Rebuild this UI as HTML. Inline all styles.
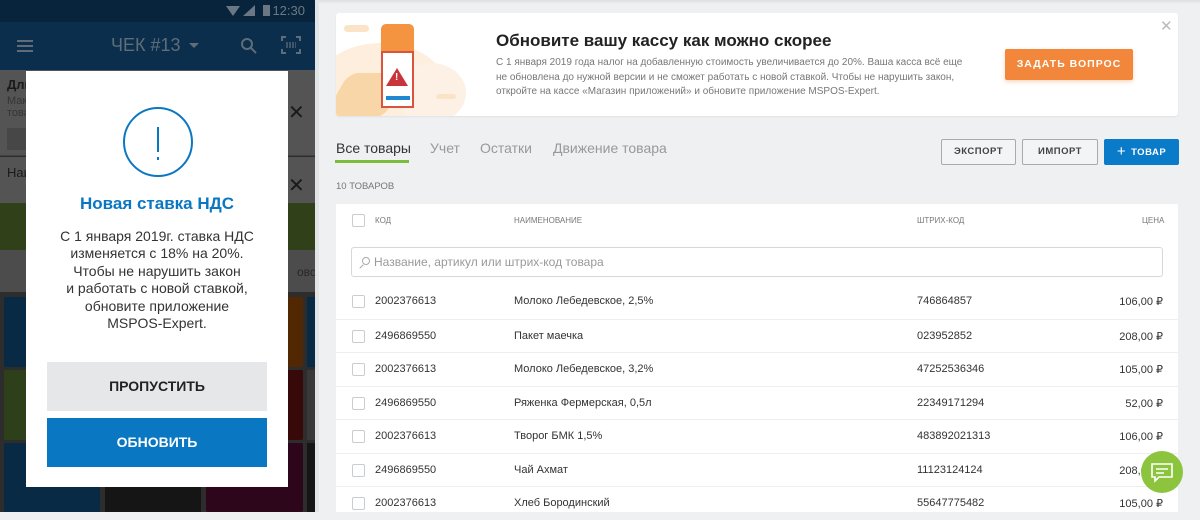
<!DOCTYPE html>
<html><head><meta charset="utf-8"><style>
*{margin:0;padding:0;box-sizing:border-box}
body{width:1200px;height:512px;overflow:hidden;background:#eef0f2;font-family:"Liberation Sans","Noto Sans CJK SC",sans-serif;position:relative}
.a{position:absolute}
.t{position:absolute;white-space:nowrap}
.row{position:absolute;left:336px;width:842px;height:34px;border-top:1px solid #eceef0;font-size:11px;color:#333}
.row .cb{position:absolute;left:16px;top:10px;width:13px;height:13px;border:1px solid #c9ccd0;border-radius:2px;background:#fff}
.row span{position:absolute;top:10px}
</style></head><body>
<!-- phone -->
<div class="a" style="left:0;top:0;width:315px;height:512px;background:#3a3a3a;overflow:hidden">
 <div class="a" style="left:0;top:0;width:315px;height:22px;background:#0a2f4d"></div>
 <div class="t" style="right:10px;top:3px;color:#8a9aa8;font-size:13px">12:30</div>
 <div class="a" style="left:226px;top:6px;width:0;height:0;border-left:7px solid transparent;border-right:7px solid transparent;border-top:10px solid #8a9aa8"></div>
 <div class="a" style="left:243px;top:5px;width:0;height:0;border-left:12px solid transparent;border-bottom:11px solid #8a9aa8"></div>
 <div class="a" style="left:263px;top:5px;width:7px;height:11px;background:#8a9aa8"></div>
 <div class="a" style="left:0;top:22px;width:315px;height:48px;background:#0d3c60"></div>
 <div class="a" style="left:17px;top:40px;width:16px;height:2px;background:#7b8c9b;box-shadow:0 5px 0 #7b8c9b,0 10px 0 #7b8c9b"></div>
 <div class="t" style="left:111px;top:35px;color:#7b8c9b;font-size:18px">ЧЕК #13</div>
 <div class="a" style="left:189px;top:43px;border-left:5px solid transparent;border-right:5px solid transparent;border-top:5px solid #7b8c9b"></div>
 <svg class="a" style="left:240px;top:37px" width="18" height="18" viewBox="0 0 18 18"><circle cx="7" cy="7" r="5" fill="none" stroke="#7b8c9b" stroke-width="2"/><path d="M11 11l5 5" stroke="#7b8c9b" stroke-width="2"/></svg>
 <svg class="a" style="left:281px;top:36px" width="20" height="18" viewBox="0 0 20 18"><path d="M1 5V1h4M15 1h4v4M19 13v4h-4M5 17H1v-4" fill="none" stroke="#7b8c9b" stroke-width="2"/><path d="M5 7h10M5 9h10M5 11h10" stroke="#7b8c9b" stroke-width="1.2" stroke-dasharray="2 1"/></svg>
 <div class="a" style="left:0;top:70px;width:315px;height:86px;background:#6c6c6c;border-bottom:1px solid #555"></div>
 <div class="t" style="left:7px;top:77px;font-size:13px;color:#222;font-weight:bold">Дли</div>
 <div class="t" style="left:7px;top:95px;font-size:11px;color:#444">Мак<br>това</div>
 <div class="a" style="left:7px;top:128px;width:40px;height:22px;background:#5c5c5c"></div>
 <div class="t" style="left:288px;top:100px;font-size:20px;color:#222">✕</div>
 <div class="a" style="left:0;top:157px;width:315px;height:46px;background:#6c6c6c"></div>
 <div class="t" style="left:7px;top:165px;font-size:13px;color:#222">Наи</div>
 <div class="t" style="left:288px;top:173px;font-size:20px;color:#222">✕</div>
 <div class="a" style="left:0;top:203px;width:315px;height:47px;background:#3e5220"></div>
 <div class="a" style="left:0;top:250px;width:315px;height:42px;background:#626262"></div>
 <div class="t" style="left:297px;top:265px;font-size:12px;color:#333">ово</div>
 <div class="a" style="left:4px;top:297px;width:96px;height:70px;background:#0b3658;border-radius:2px"></div>
 <div class="a" style="left:4px;top:370px;width:96px;height:70px;background:#3a5220;border-radius:2px"></div>
 <div class="a" style="left:4px;top:443px;width:96px;height:69px;background:#0b3658;border-radius:2px"></div>
 <div class="a" style="left:105px;top:443px;width:96px;height:69px;background:#1c1c1c"></div>
 <div class="a" style="left:206px;top:297px;width:97px;height:70px;background:#6a3405;border-radius:2px"></div>
 <div class="a" style="left:206px;top:370px;width:97px;height:70px;background:#480c0c;border-radius:2px"></div>
 <div class="a" style="left:206px;top:443px;width:97px;height:69px;background:#3a0823;border-radius:2px"></div>
 <div class="a" style="left:307px;top:297px;width:8px;height:70px;background:#0b3658"></div>
 <div class="a" style="left:307px;top:370px;width:8px;height:70px;background:#4a4a4a"></div>
 <div class="a" style="left:307px;top:443px;width:8px;height:69px;background:#1c1c1c"></div>
 <div class="a" style="left:0;top:0;width:315px;height:512px;background:rgba(0,0,0,.22)"></div>
</div>
<div class="a" style="left:315px;top:0;width:4px;height:512px;background:#e2e4e6"></div>
<!-- dialog -->
<div class="a" style="left:26px;top:71px;width:262px;height:416px;background:#fff">
 <div class="a" style="left:97px;top:36px;width:70px;height:70px;border:2px solid #0a77c2;border-radius:50%"></div>
 <div class="a" style="left:131px;top:56px;width:2px;height:25px;background:#0a77c2"></div>
 <div class="a" style="left:131px;top:86px;width:2px;height:3px;background:#0a77c2"></div>
 <div class="t" style="left:0;width:262px;text-align:center;top:123px;font-size:17px;color:#0a77c2;font-weight:bold">Новая ставка НДС</div>
 <div class="a" style="left:0;width:262px;text-align:center;top:157px;font-size:14px;line-height:17.4px;color:#333">С 1 января 2019г. ставка НДС<br>изменяется с 18% на 20%.<br>Чтобы не нарушить закон<br>и работать с новой ставкой,<br>обновите приложение<br>MSPOS-Expert.</div>
 <div class="a" style="left:21px;top:291px;width:220px;height:49px;background:#e6e7e9;text-align:center;line-height:49px;font-size:14px;color:#222;font-weight:bold">ПРОПУСТИТЬ</div>
 <div class="a" style="left:21px;top:347px;width:220px;height:49px;background:#0a77c2;text-align:center;line-height:49px;font-size:14px;color:#fff;font-weight:bold">ОБНОВИТЬ</div>
</div>
<!-- right -->
<div class="a" style="left:319px;top:0;width:881px;height:4px;background:linear-gradient(#dcdee0,#eef0f2)"></div>
<div class="a" style="left:336px;top:13px;width:842px;height:103px;background:#fff;border-radius:3px;box-shadow:0 1px 2px rgba(0,0,0,.06);overflow:hidden">
 <div class="a" style="left:-20px;top:30px;width:130px;height:90px;background:#fdeede;border-radius:50%"></div>
 <div class="a" style="left:60px;top:50px;width:70px;height:60px;background:#fdf0e4;border-radius:50%"></div>
 <div class="a" style="left:8px;top:12px;width:25px;height:7px;background:#fbe3c8;border-radius:5px"></div>
 <div class="a" style="left:100px;top:81px;width:20px;height:5px;background:#fbe3c8;border-radius:4px"></div>
 <div class="a" style="left:0;top:60px;width:60px;height:45px;background:#f9d6a8;transform:skewX(-30deg);border-radius:10px"></div>
 <div class="a" style="left:45px;top:11px;width:33px;height:31px;background:#f59440;border-radius:5px 5px 0 0"></div>
 <div class="a" style="left:45px;top:38px;width:33px;height:57px;background:#fff;border:2px solid #d9533e"></div>
 <div class="a" style="left:50px;top:55px;width:0;height:0;border-left:11px solid transparent;border-right:11px solid transparent;border-bottom:18px solid #c9343a"></div>
 <div class="t" style="left:59px;top:59px;color:#fff;font-size:10px;font-weight:bold">!</div>
 <div class="a" style="left:50px;top:83px;width:24px;height:4px;background:#1e88d0"></div>
 <div class="t" style="left:160px;top:18px;font-size:17px;font-weight:bold;color:#222">Обновите вашу кассу как можно скорее</div>
 <div class="a" style="left:160px;top:43px;font-size:10px;line-height:14.5px;color:#777;white-space:nowrap">С 1 января 2019 года налог на добавленную стоимость увеличивается до 20%. Ваша касса всё еще<br>не обновлена до нужной версии и не сможет работать с новой ставкой. Чтобы не нарушить закон,<br>откройте на кассе «Магазин приложений» и обновите приложение MSPOS-Expert.</div>
 <div class="a" style="left:669px;top:36px;width:128px;height:31px;background:#f2863a;color:#fff;font-size:10.5px;font-weight:bold;text-align:center;line-height:31px;letter-spacing:1px;border-radius:2px;box-shadow:0 2px 4px rgba(240,130,50,.3)">ЗАДАТЬ ВОПРОС</div>
 <div class="t" style="left:824px;top:4px;color:#bbb;font-size:15px">✕</div>
</div>
<div class="t" style="left:336px;top:140px;font-size:14px;color:#333">Все товары</div>
<div class="a" style="left:335px;top:160px;width:74px;height:3px;background:#7bbd3a"></div>
<div class="t" style="left:430px;top:140px;font-size:14px;color:#999">Учет</div>
<div class="t" style="left:480px;top:140px;font-size:14px;color:#999">Остатки</div>
<div class="t" style="left:553px;top:140px;font-size:14px;color:#999">Движение товара</div>
<div class="t" style="left:336px;top:181px;font-size:9.5px;color:#777">10 ТОВАРОВ</div>
<div class="a" style="left:941px;top:139px;width:75px;height:26px;border:1px solid #aaa;border-radius:2px;background:#f3f4f5;font-size:9.5px;font-weight:bold;color:#444;text-align:center;line-height:24px;letter-spacing:.5px">ЭКСПОРТ</div>
<div class="a" style="left:1022px;top:139px;width:76px;height:26px;border:1px solid #aaa;border-radius:2px;background:#f3f4f5;font-size:9.5px;font-weight:bold;color:#444;text-align:center;line-height:24px;letter-spacing:.5px">ИМПОРТ</div>
<div class="a" style="left:1104px;top:139px;width:75px;height:26px;border-radius:2px;background:#0a7bc8;font-size:9.5px;font-weight:bold;color:#fff;text-align:center;line-height:26px;letter-spacing:.5px"><span style="font-size:15px;vertical-align:-1px;margin-right:5px;font-weight:normal">+</span>ТОВАР</div>
<div class="a" style="left:336px;top:204px;width:842px;height:308px;background:#fff"></div>
<div class="a" style="left:352px;top:214px;width:13px;height:13px;border:1px solid #c9ccd0;border-radius:2px"></div>
<div class="t" style="left:375px;top:216px;font-size:8px;color:#777">КОД</div>
<div class="t" style="left:514px;top:216px;font-size:8px;color:#777">НАИМЕНОВАНИЕ</div>
<div class="t" style="left:917px;top:216px;font-size:8px;color:#777">ШТРИХ-КОД</div>
<div class="t" style="left:1142px;top:216px;font-size:8px;color:#777">ЦЕНА</div>
<div class="a" style="left:351px;top:247px;width:812px;height:30px;border:1px solid #d6d8db;border-radius:3px"></div>
<div class="a" style="left:362px;top:257px;width:8px;height:8px;border:1px solid #aaa;border-radius:50%"></div>
<div class="a" style="left:359px;top:266px;width:5px;height:1px;background:#aaa;transform:rotate(-45deg)"></div>
<div class="t" style="left:374px;top:255px;font-size:12px;color:#999">Название, артикул или штрих-код товара</div>
<div class="row" style="top:285px;border-top:none"><div class="cb"></div><span style="left:39px">2002376613</span><span style="left:178px">Молоко Лебедевское, 2,5%</span><span style="left:581px">746864857</span><span style="right:15px">106,00 ₽</span></div>
<div class="row" style="top:319px"><div class="cb"></div><span style="left:39px">2496869550</span><span style="left:178px">Пакет маечка</span><span style="left:581px">023952852</span><span style="right:15px">208,00 ₽</span></div>
<div class="row" style="top:352px"><div class="cb"></div><span style="left:39px">2002376613</span><span style="left:178px">Молоко Лебедевское, 3,2%</span><span style="left:581px">47252536346</span><span style="right:15px">105,00 ₽</span></div>
<div class="row" style="top:386px"><div class="cb"></div><span style="left:39px">2496869550</span><span style="left:178px">Ряженка Фермерская, 0,5л</span><span style="left:581px">22349171294</span><span style="right:15px">52,00 ₽</span></div>
<div class="row" style="top:419px"><div class="cb"></div><span style="left:39px">2002376613</span><span style="left:178px">Творог БМК 1,5%</span><span style="left:581px">483892021313</span><span style="right:15px">106,00 ₽</span></div>
<div class="row" style="top:453px"><div class="cb"></div><span style="left:39px">2496869550</span><span style="left:178px">Чай Ахмат</span><span style="left:581px">11123124124</span><span style="right:15px">208,00 ₽</span></div>
<div class="row" style="top:486px"><div class="cb"></div><span style="left:39px">2002376613</span><span style="left:178px">Хлеб Бородинский</span><span style="left:581px">55647775482</span><span style="right:15px">105,00 ₽</span></div>
<div class="a" style="left:1141px;top:451px;width:42px;height:42px;border-radius:50%;background:#8cc43e"></div>
<svg class="a" style="left:1150px;top:463px" width="24" height="22" viewBox="0 0 24 22"><path d="M2 1h20v13H9l-4 4v-4H2z" fill="none" stroke="#fff" stroke-width="1.6"/><path d="M6 6h12M6 10h8" stroke="#fff" stroke-width="1.6"/></svg>
</body></html>
